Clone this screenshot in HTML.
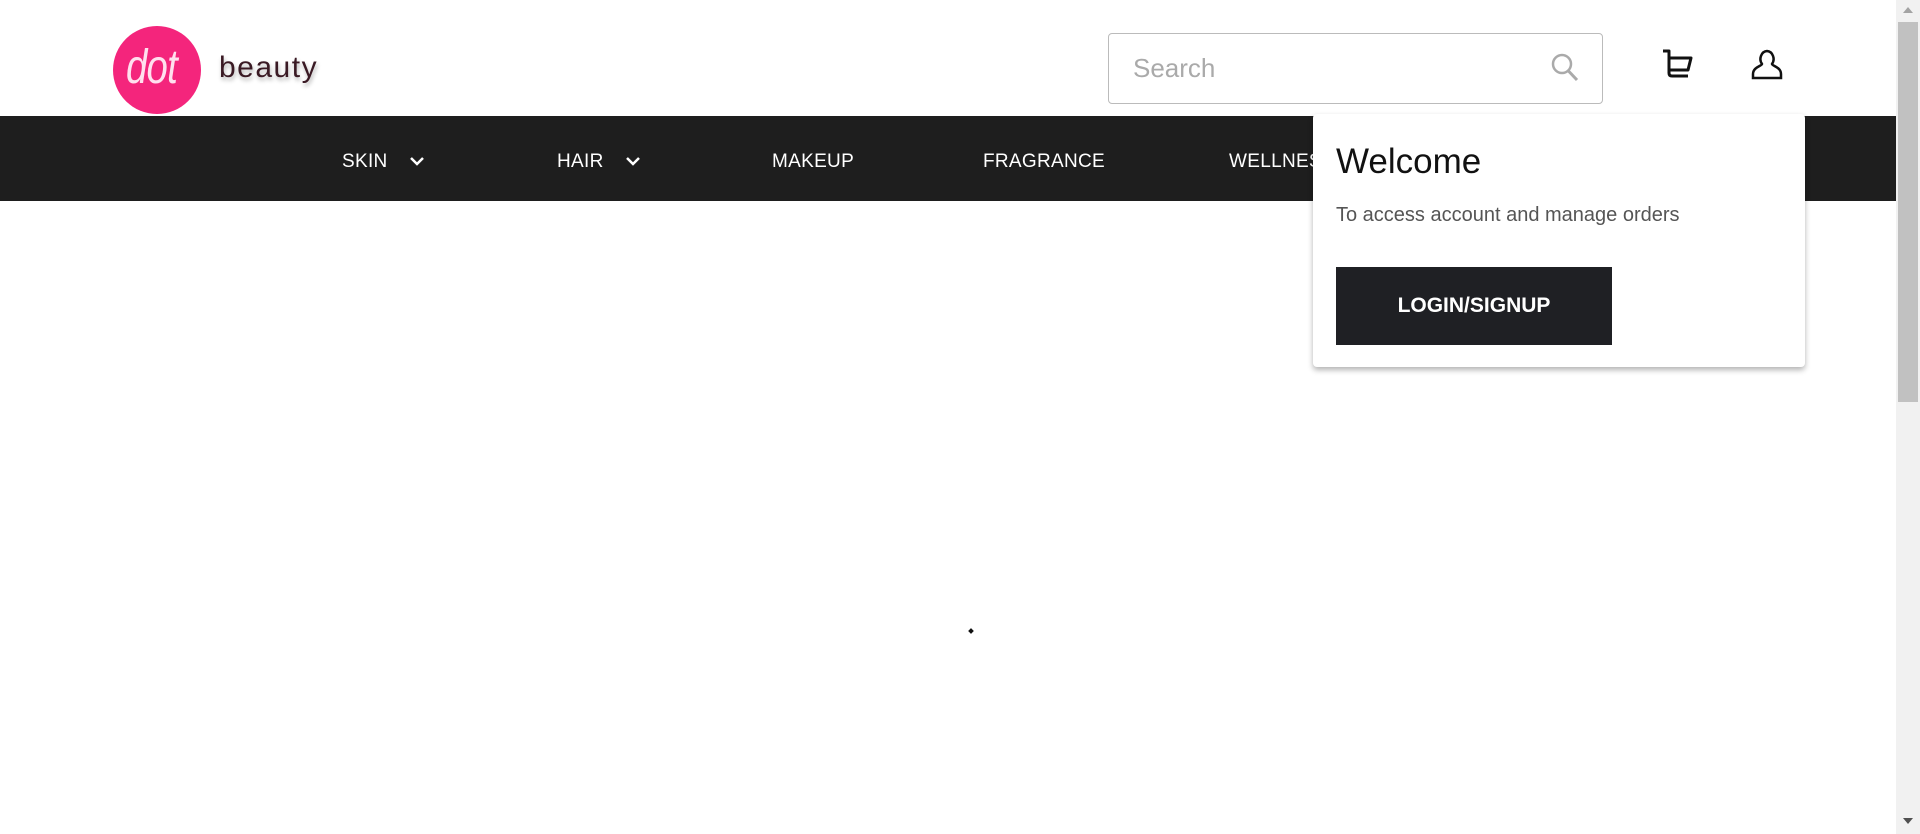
<!DOCTYPE html>
<html><head><meta charset="utf-8"><style>
*{margin:0;padding:0;box-sizing:border-box}
body{width:1920px;height:834px;overflow:hidden;background:#fff;font-family:"Liberation Sans",sans-serif;position:relative}
.abs{position:absolute}
.nav{left:0;top:116px;width:1896px;height:85px;background:#1e1e1e}
.nav span{position:absolute;top:35px;color:#fff;font-size:19px;letter-spacing:0.3px}
</style></head><body>
<div class="abs" style="left:113px;top:26px;width:88px;height:88px;border-radius:50%;background:#f4257c"></div>
<div class="abs" style="left:126px;top:40px;color:#ffe0ee;font-family:'Liberation Sans Narrow','Liberation Sans',sans-serif;font-size:48px;font-style:italic;letter-spacing:-1px;transform:scaleX(0.8);transform-origin:left">dot</div>
<div class="abs" style="left:219px;top:51px;color:#3a1a24;font-size:30px;letter-spacing:1.5px;text-shadow:1px 3px 4px rgba(0,0,0,.3)">beauty</div>

<div class="abs" style="left:1108px;top:33px;width:495px;height:71px;border:1px solid #bbb;border-radius:4px"></div>
<div class="abs" style="left:1133px;top:53px;color:#aaa;font-size:26px">Search</div>
<svg class="abs" style="left:1550px;top:52px" width="30" height="32" viewBox="0 0 30 32"><circle cx="12" cy="12" r="9" fill="none" stroke="#aaa" stroke-width="2.5"/><line x1="18.5" y1="19" x2="27" y2="28" stroke="#aaa" stroke-width="3"/></svg>

<svg class="abs" style="left:1660px;top:48px" width="36" height="34" viewBox="0 0 36 34"><path d="M3 3h6v22q0 3 3 3h16M9 10h22l-3 12H9" fill="none" stroke="#111" stroke-width="3" stroke-linejoin="round"/></svg>
<svg class="abs" style="left:1751px;top:48px" width="32" height="34" viewBox="0 0 32 34"><path d="M16 3a7 8 0 0 1 5 13c0 2 9 3 9 10v4H2v-4c0-7 9-8 9-10a7 8 0 0 1 5-13z" fill="none" stroke="#111" stroke-width="2.5"/></svg>

<div class="abs nav">
<span style="left:342px">SKIN</span>
<span style="left:557px">HAIR</span>
<span style="left:772px">MAKEUP</span>
<span style="left:983px">FRAGRANCE</span>
<span style="left:1229px">WELLNESS</span>
</div>
<svg class="abs" style="left:409px;top:156px" width="16" height="10" viewBox="0 0 16 10"><path d="M2 2l6 6 6-6" fill="none" stroke="#fff" stroke-width="2.5"/></svg>
<svg class="abs" style="left:625px;top:156px" width="16" height="10" viewBox="0 0 16 10"><path d="M2 2l6 6 6-6" fill="none" stroke="#fff" stroke-width="2.5"/></svg>

<div class="abs" style="left:1313px;top:114px;width:492px;height:253px;background:#fff;border-radius:4px;box-shadow:0 3px 6px rgba(0,0,0,.3)">
<div class="abs" style="left:23px;top:28px;font-size:35px;color:#111">Welcome</div>
<div class="abs" style="left:23px;top:90px;font-size:20px;color:#555">To access account and manage orders</div>
<div class="abs" style="left:23px;top:153px;width:276px;height:78px;background:#1f2024;color:#fff;font-weight:bold;font-size:21px;text-align:center;line-height:78px">LOGIN/SIGNUP</div>
</div>

<div class="abs" style="left:969px;top:629px;width:4px;height:4px;background:#111;transform:rotate(45deg)"></div>

<div class="abs" style="left:1896px;top:0;width:24px;height:834px;background:#f1f1f1"></div>
<div class="abs" style="left:1898px;top:22px;width:20px;height:380px;background:#c1c1c1"></div>
<div class="abs" style="left:1903px;top:7px;width:0;height:0;border-left:5px solid transparent;border-right:5px solid transparent;border-bottom:6px solid #a3a3a3"></div>
<div class="abs" style="left:1903px;top:818px;width:0;height:0;border-left:5px solid transparent;border-right:5px solid transparent;border-top:6px solid #505050"></div>
</body></html>
